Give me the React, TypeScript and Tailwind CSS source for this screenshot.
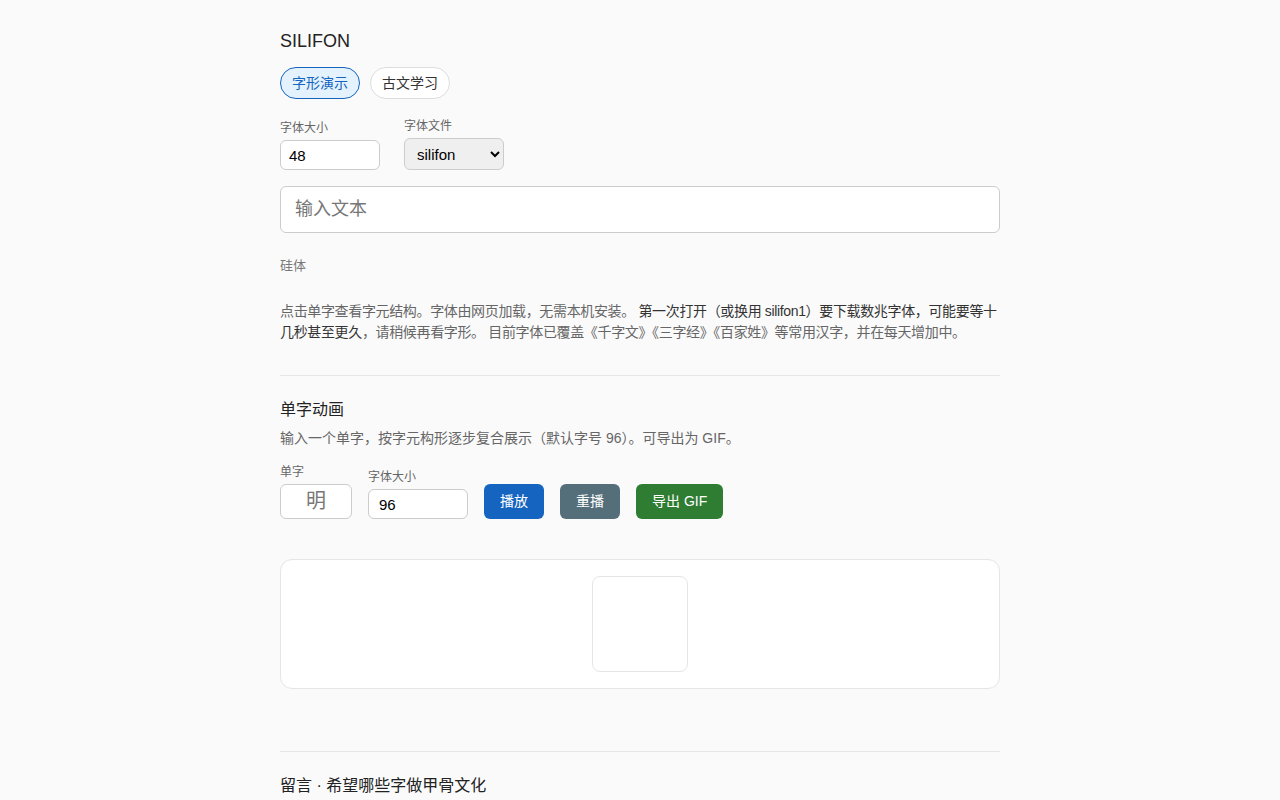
import React, { useState } from "react";

const font = {
  fontFamily: '"Liberation Sans", "Noto Sans CJK SC", sans-serif',
};

const tabs = ["字形演示", "古文学习"];

export default function App() {
  const [tab, setTab] = useState(0);

  return (
    <div className="min-h-screen w-full bg-[#fafafa] text-[#222]" style={font}>
      <div className="mx-auto w-[720px] pt-[29px]">
        <h1 className="text-[18px] leading-[24px] font-normal text-[#222]">SILIFON</h1>

        {/* tabs */}
        <div className="mt-[14px] flex gap-[10px]">
          {tabs.map((t, i) => (
            <button
              key={t}
              onClick={() => setTab(i)}
              className={`h-[32px] px-[11px] rounded-full border text-[14px] ${
                tab === i
                  ? "bg-[#e3f2fd] border-[#1565c0] text-[#1565c0]"
                  : "bg-white border-[#dddddd] text-[#333]"
              }`}
            >
              {t}
            </button>
          ))}
        </div>

        {/* font size / file */}
        <div className="mt-[19px] flex items-end gap-[24px]">
          <label className="flex flex-col">
            <span className="text-[12px] leading-[16px] text-[#666] mb-[4px]">字体大小</span>
            <input
              defaultValue="48"
              className="w-[100px] h-[30px] px-[8px] rounded-md border border-[#cccccc] bg-white text-[15px] text-black outline-none"
            />
          </label>
          <label className="flex flex-col">
            <span className="text-[12px] leading-[16px] text-[#666] mb-[4px]">字体文件</span>
            <select className="w-[100px] h-[32px] px-[8px] rounded-md border border-[#cccccc] bg-[#efefef] text-[15px] text-black">
              <option>silifon</option>
              <option>silifon1</option>
            </select>
          </label>
        </div>

        <input
          placeholder="输入文本"
          className="mt-[16px] w-full h-[47px] px-[14px] rounded-md border border-[#cccccc] bg-white text-[18px] placeholder:text-[#777] outline-none"
        />

        <div className="mt-[25px] text-[13px] leading-[16px] text-[#777]">硅体</div>

        <p className="mt-[27px] text-[14px] leading-[21px] tracking-[-0.35px] text-[#666]">
          点击单字查看字元结构。字体由网页加载，无需本机安装。{" "}
          <span className="text-[#333]">第一次打开（或换用 silifon1）要下载数兆字体，可能要等十几秒甚至更久</span>
          ，请稍候再看字形。 目前字体已覆盖《千字文》《三字经》《百家姓》等常用汉字，并在每天增加中。
        </p>

        <div className="mt-[32px] border-t border-[#e6e6e6]" />

        {/* single char animation */}
        <h2 className="mt-[23px] text-[16px] leading-[22px] text-[#222]">单字动画</h2>
        <p className="mt-[7px] text-[14px] leading-[20px] text-[#666]">
          输入一个单字，按字元构形逐步复合展示（默认字号 96）。可导出为 GIF。
        </p>

        <div className="mt-[16px] flex items-end gap-[16px]">
          <label className="flex flex-col">
            <span className="text-[12px] leading-[16px] text-[#666] mb-[4px]">单字</span>
            <input
              placeholder="明"
              className="w-[72px] h-[35px] text-center rounded-md border border-[#cccccc] bg-white text-[20px] placeholder:text-[#777] outline-none"
            />
          </label>
          <label className="flex flex-col">
            <span className="text-[12px] leading-[16px] text-[#666] mb-[4px]">字体大小</span>
            <input
              defaultValue="96"
              className="w-[100px] h-[30px] px-[10px] rounded-md border border-[#cccccc] bg-white text-[15px] text-black outline-none"
            />
          </label>
          <button className="h-[35px] px-[16px] rounded-md bg-[#1565c0] text-white text-[14px]">播放</button>
          <button className="h-[35px] px-[16px] rounded-md bg-[#546e7a] text-white text-[14px]">重播</button>
          <button className="h-[35px] px-[16px] rounded-md bg-[#2e7d32] text-white text-[14px]">导出 GIF</button>
        </div>

        <div className="mt-[40px] rounded-xl border border-[#e5e5e5] bg-white p-[16px] flex justify-center">
          <div className="w-[96px] h-[96px] rounded-lg border border-[#e5e5e5] bg-white" />
        </div>

        <div className="mt-[62px] border-t border-[#e6e6e6]" />

        <h2 className="mt-[23px] text-[16px] leading-[22px] text-[#222]">留言 · 希望哪些字做甲骨文化</h2>
      </div>
    </div>
  );
}
